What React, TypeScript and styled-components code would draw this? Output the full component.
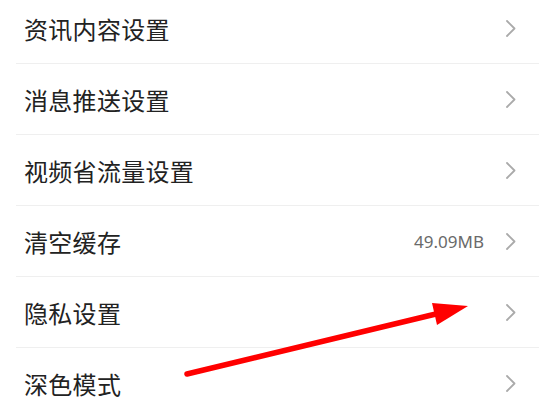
import styled, { createGlobalStyle } from 'styled-components'

const GlobalStyle = createGlobalStyle`
  body {
    margin: 0;
    background: #fff;
    font-family: "Noto Sans CJK SC", "Noto Sans", sans-serif;
  }
`

const Page = styled.div`
  position: relative;
  width: 539px;
  height: 417px;
  overflow: hidden;
  background: #fff;
`

const List = styled.div`
  display: flex;
  flex-direction: column;
  margin-top: -7px;
`

const Row = styled.div`
  display: flex;
  align-items: center;
  height: 70px;
  margin-left: 16px;
  padding: 0 22px 0 8px;
  border-bottom: 1px solid #efefef;
`

const Label = styled.div`
  flex: 1;
  font-size: 24px;
  color: #222;
  letter-spacing: 0.3px;
`

const Value = styled.span`
  font-family: "Noto Sans", "Open Sans", sans-serif;
  font-size: 17px;
  color: #6a6a6a;
  margin-right: 21px;
`

const Chevron = () => (
  <svg width='12' height='19' viewBox='0 0 12 19'>
    <polyline points='2,2 9.5,9.5 2,17' fill='none' stroke='#aaa' strokeWidth='1.8' strokeLinecap='round' strokeLinejoin='round' />
  </svg>
)

const ArrowLayer = styled.svg`
  position: absolute;
  left: 0;
  top: 0;
  pointer-events: none;
`

const items = [
  { label: '资讯内容设置' },
  { label: '消息推送设置' },
  { label: '视频省流量设置' },
  { label: '清空缓存', value: '49.09MB' },
  { label: '隐私设置' },
  { label: '深色模式' },
]

export default function App() {
  return (
    <Page>
      <GlobalStyle />
      <List>
        {items.map((item, index) => (
          <Row key={index}>
            <Label>{item.label}</Label>
            {item.value && <Value>{item.value}</Value>}
            <Chevron />
          </Row>
        ))}
      </List>
      <ArrowLayer width='539' height='417' viewBox='0 0 539 417'>
        <line x1='187' y1='374' x2='440' y2='313' stroke='#f00' strokeWidth='5.5' strokeLinecap='round' />
        <polygon points='468,306 432,303 437,325' fill='#f00' />
      </ArrowLayer>
    </Page>
  )
}
